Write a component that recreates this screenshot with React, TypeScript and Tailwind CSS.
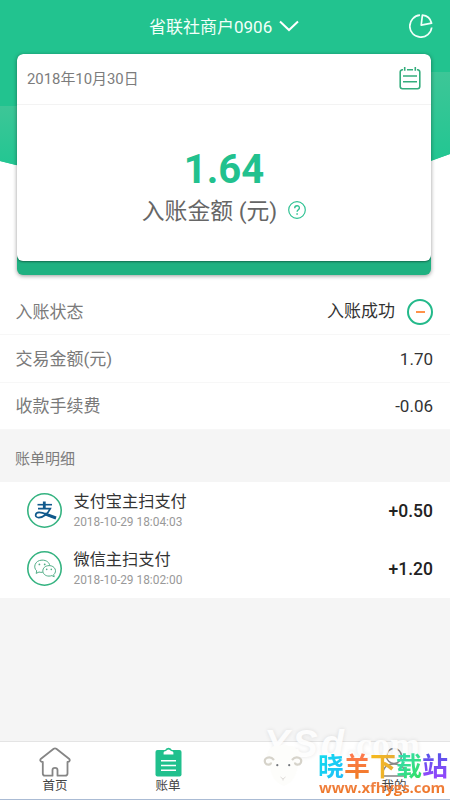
import type { ReactNode } from "react";

type Bill = {
  id: number;
  title: string;
  time: string;
  amount: string;
  icon: ReactNode;
};

function ChevronIcon() {
  return (
    <svg className="w-5 h-3" viewBox="0 0 20 12" fill="none" stroke="#fff" strokeWidth="2">
      <path d="M1 1.5 L10 10 L19 1.5" />
    </svg>
  );
}

function PieIcon() {
  return (
    <svg className="w-6 h-6" viewBox="0 0 24 24" fill="none" stroke="#f0fff9" strokeWidth="1.7" strokeLinejoin="round">
      <path d="M11 1.2 A11 11 0 1 0 22.7 13.5" />
      <path d="M13.4 1.2 A10.5 10.5 0 0 1 22.6 9.2 L12.2 11.2 Z" />
    </svg>
  );
}

function CalendarIcon() {
  return (
    <svg className="w-[22px] h-6" viewBox="0 0 22 24" fill="none" stroke="#35ad7d" strokeWidth="1.6">
      <path d="M4 3.7 H3.4 A2.4 2.4 0 0 0 1.2 6 V20.5 A2.4 2.4 0 0 0 3.5 22.8 H18.5 A2.4 2.4 0 0 0 20.8 20.5 V6 A2.4 2.4 0 0 0 18.6 3.7 H18" />
      <path d="M5.7 1 V4.7 M16.3 1 V4.7 M8 3.7 H14 M4 10 H18 M4 15.7 H18" />
    </svg>
  );
}

function HelpIcon() {
  return (
    <svg className="w-[18px] h-[18px]" viewBox="0 0 18 18" fill="none" stroke="#2fc293" strokeWidth="1.2">
      <circle cx="9" cy="9" r="8.3" />
      <path d="M6.7 7.2 C6.7 4 11.4 4 11.4 6.9 C11.4 8.7 9.1 8.7 9.1 10.8" strokeWidth="1.4" />
      <path d="M9.1 12.2 V13.7" strokeWidth="1.5" />
    </svg>
  );
}

function AlipayIcon() {
  return (
    <svg className="w-[35px] h-[35px]" viewBox="0 0 35 35" fill="none">
      <circle cx="17.5" cy="17.5" r="16.7" stroke="#35b381" strokeWidth="1.6" />
      <g stroke="#10598c">
        <path d="M10.5 11.7 H25" strokeWidth="1.6" />
        <path d="M17.3 8.5 V15.5" strokeWidth="2.8" />
        <path d="M11 15.6 H23.3 C21 20.5 16 24.7 11.7 24.6 C7.4 24.4 7.8 19.7 12 19.4 C16.5 19.2 20.5 22.6 28.8 25" strokeWidth="1.7" />
        <path d="M18 20.9 L29 25" strokeWidth="3" />
      </g>
    </svg>
  );
}

function WechatIcon() {
  return (
    <svg className="w-[35px] h-[35px]" viewBox="0 0 35 35" fill="none" stroke="#50ad86">
      <circle cx="17.5" cy="17.5" r="16.7" stroke="#35b381" strokeWidth="1.6" />
      <path d="M15.8 21.2 C14.5 21.5 13.2 21.4 12 21 L9.2 22.4 L9.7 19.8 C5.8 16.7 7.8 9.3 15 9.1 C19.6 9 22.5 11.7 22.7 14.6" />
      <path d="M22.2 14.6 C13.7 14.7 13.8 25 22 25.1 C23 25.1 24 24.9 24.9 24.6 L27.2 25.8 L26.7 23.6 C30.5 20.5 28 14.6 22.2 14.6 Z" />
      <g fill="#50ad86" stroke="none">
        <circle cx="12.4" cy="13.4" r="0.9" />
        <circle cx="17.7" cy="13.4" r="0.9" />
        <circle cx="19.7" cy="18.4" r="0.8" />
        <circle cx="24.3" cy="18.4" r="0.8" />
      </g>
    </svg>
  );
}

function HomeIcon() {
  return (
    <svg className="w-8 h-[30px]" viewBox="0 0 32 30" fill="none" stroke="#858585" strokeWidth="1.8" strokeLinejoin="round">
      <path d="M14.7 1.8 Q16 .8 17.3 1.8 L30 11.7 C31.5 13.2 30.5 15 28.5 15 V26.5 Q28.5 28.7 26 28.7 H18.5 V23 C18.5 20.2 13.5 20.2 13.5 23 V28.7 H6 Q3.8 28.7 3.8 26.5 V15 C1.5 15 .5 13.2 2 11.7 Z" />
    </svg>
  );
}

function BillIcon() {
  return (
    <svg className="w-[27px] h-[30px]" viewBox="0 0 27 30">
      <rect x="0.5" y="3" width="26" height="26.5" rx="2" fill="#20c08d" />
      <path d="M7.5 7.8 V5 Q7.5 3.5 10 3.3 Q10.8 .7 13.5 .7 Q16.2 .7 17 3.3 Q19.5 3.5 19.5 5 V7.8 Z" fill="#20c08d" />
      <path d="M8.6 7.4 V5.5 Q8.6 4.3 11 4.1 Q11.9 2.4 13.5 2.4 Q15.1 2.4 16 4.1 Q18.4 4.3 18.4 5.5 V7.4 Z" fill="#fff" />
      <path d="M6 13.7 H21 M6 18.5 H21 M6 23.3 H21" stroke="#fff" strokeWidth="1.6" />
    </svg>
  );
}

function UserIcon() {
  return (
    <svg className="w-8 h-[30px]" viewBox="0 0 32 30" fill="none" stroke="#858585" strokeWidth="1.5">
      <circle cx="16" cy="9" r="7.5" />
      <path d="M4.5 29 C4.5 21 9 17 16 17 C23 17 27.5 21 27.5 29 Z" />
    </svg>
  );
}

function SheepIcon() {
  return (
    <svg className="w-[46px] h-[46px]" viewBox="0 0 46 46" fill="none">
      <path d="M10 6 Q14 1 19 3 Q24 0 29 3 Q35 2 37 8 Q43 14 38 23 Q35 39 24 43 Q12 39 10 24 Q3 14 10 6 Z" fill="#fdfdfb" />
      <g stroke="#d6d3ca" strokeWidth="2.2">
        <path d="M14 17 C10 12 3 15 5.2 19.7 C6.6 22.5 11 22 11 19.5" />
        <path d="M32 17 C36 12 43 15 40.8 19.7 C39.4 22.5 35 22 35 19.5" />
      </g>
      <circle cx="17.3" cy="22.2" r="1.1" fill="#72767c" />
      <circle cx="29.2" cy="22.2" r="1.1" fill="#72767c" />
      <path d="M20.5 34 L23 36 L25.5 34 M23 36 V37.5" stroke="#dedbd8" />
    </svg>
  );
}

const bills: Bill[] = [
  { id: 1, title: "支付宝主扫支付", time: "2018-10-29 18:04:03", amount: "+0.50", icon: <AlipayIcon /> },
  { id: 2, title: "微信主扫支付", time: "2018-10-29 18:02:00", amount: "+1.20", icon: <WechatIcon /> },
];

function Row({ label, children }: { label: string; children: ReactNode }) {
  return (
    <div className="flex h-[47.3px] items-center justify-between border-b border-[#f7f7f7] pl-[15.5px] pr-[17px] pt-0.5 text-[17px]">
      <span className="pt-px text-[#7a7a7a]">{label}</span>
      <div className="flex items-center gap-3 text-[#333]">{children}</div>
    </div>
  );
}

function Tab({ label, icon }: { label: string; icon: ReactNode }) {
  return (
    <div className="flex w-[110px] flex-col items-center pt-[5px]">
      {icon}
      <span className="text-[12.5px] leading-[18px] text-[#444]">{label}</span>
    </div>
  );
}

function Watermark() {
  return (
    <div className="pointer-events-none absolute left-0 top-0 h-full w-full">
      <div className="absolute left-[264px] top-[720px] flex items-baseline text-white/90 [text-shadow:0_0_4px_#0000001c]">
        <span className="font-['Liberation_Sans'] text-[38px] font-bold italic leading-[48px] tracking-[3px]">YSd</span>
        <span className="font-['Liberation_Serif'] text-[36px] font-bold leading-[40px]">.com</span>
      </div>
      <div className="absolute left-[260px] top-[743px]">
        <SheepIcon />
      </div>
      <div className="absolute left-[318px] top-[752px] flex text-[26px] font-bold leading-[30px] text-transparent">
        <span className="bg-linear-to-br from-[#12ddec] to-[#21bafa] bg-clip-text">晓</span>
        <span className="bg-linear-to-b from-[#ff7950] to-[#ee7c11] bg-clip-text">羊</span>
        <span className="bg-linear-to-r from-[#f7ba16] to-[#e7ad35] bg-clip-text">下</span>
        <span className="bg-linear-to-br from-[#36dcb7] to-[#35df54] bg-clip-text">载</span>
        <span className="bg-linear-to-b from-[#5153e9] to-[#9d42ff] bg-clip-text">站</span>
      </div>
      <div className="absolute left-[319px] top-[777px] bg-linear-to-b from-[#f18a55] to-[#ed7008] bg-clip-text font-['Open_Sans'] text-[15px] font-bold leading-[21px] tracking-[-0.1px] text-transparent">
        www.xfhygs.com
      </div>
    </div>
  );
}

export default function App() {
  return (
    <div className="relative flex h-[800px] w-[450px] flex-col overflow-hidden bg-[#f5f5f5] font-[Roboto,'Noto_Sans_CJK_SC',sans-serif]">
      <div className="grid h-[288px] shrink-0 bg-white">
        {/* green backdrop with the slanted lower edge */}
        <svg className="col-start-1 row-start-1 h-[170px] w-[450px]" viewBox="0 0 450 170">
          <defs>
            <linearGradient id="side" x1="0" y1="0" x2="0" y2="1">
              <stop offset="0" stopColor="#3dc697" />
              <stop offset="1" stopColor="#22c692" />
            </linearGradient>
          </defs>
          <path d="M0 0 H450 V154 L420 165 H16 L0 161 Z" fill="#22c38f" />
          <path d="M0 106 H20 V166 L0 161 Z" fill="url(#side)" />
          <path d="M430 72 H450 V154 L430 161 Z" fill="url(#side)" />
        </svg>
        <div className="col-start-1 row-start-1 flex flex-col">
          <header className="flex h-[54px] items-center justify-between pl-[149px] pr-[17px]">
            <div className="flex items-center gap-[7px] text-[17px] text-[#f2fff9]">
              <span className="pt-px">省联社商户0906</span>
              <div className="pb-[3px]">
                <ChevronIcon />
              </div>
            </div>
            <div className="pb-[3px]">
              <PieIcon />
            </div>
          </header>
          <div className="ml-[17px] h-[221px] w-[414px] overflow-hidden rounded-md bg-[#1fb181] shadow-[0_1px_4px_#0006]">
            <div className="h-[207px] rounded-md bg-white shadow-[0_1px_2px_#0006]">
              <div className="flex h-[51px] items-center justify-between border-b border-[#f3f3f3] pl-2.5 pr-2.5">
                <span className="text-[14.9px] text-[#7c7c7c]">2018年10月30日</span>
                <div className="pb-0.5">
                  <CalendarIcon />
                </div>
              </div>
              <div className="flex flex-col items-center pt-10">
                <div className="text-[40px] font-bold leading-[50px] text-[#22c18e]">1.64</div>
                <div className="mt-px flex items-center gap-[11px] text-[22.8px] leading-8 text-[#666]">
                  <span>入账金额 (元)</span>
                  <div className="pb-1">
                    <HelpIcon />
                  </div>
                </div>
              </div>
            </div>
          </div>
        </div>
      </div>

      <div className="shrink-0 bg-white">
        <Row label="入账状态">
          <span>入账成功</span>
          <span className="mb-px flex h-[26px] w-[26px] items-center justify-center rounded-full border-2 border-[#23b98a]">
            <span className="h-0.5 w-[9px] bg-[#ff9249]" />
          </span>
        </Row>
        <Row label="交易金额(元)">1.70</Row>
        <Row label="收款手续费">-0.06</Row>
      </div>

      <div className="flex h-[52px] shrink-0 items-center pl-[15px] pt-1.5 text-[15px] text-[#7d7d7d]">账单明细</div>

      <div className="h-[116px] shrink-0 bg-white">
        {bills.map((bill) => (
          <div key={bill.id} className="flex h-[58px] items-center pb-px pl-[26.5px] pr-[17px]">
            {bill.icon}
            <div className="ml-3 flex flex-1 flex-col pt-[3px]">
              <span className="text-[16.2px] leading-[22px] text-[#333]">{bill.title}</span>
              <span className="text-[11.9px] leading-[19px] text-[#999]">{bill.time}</span>
            </div>
            <span className="pt-0.5 text-[17.5px] font-medium text-[#222]">{bill.amount}</span>
          </div>
        ))}
      </div>

      <nav className="mt-auto flex h-[59px] shrink-0 gap-[3px] border-b border-t border-b-[#aabbd4] border-t-[#e4e4e4] bg-white">
        <Tab label="首页" icon={<HomeIcon />} />
        <Tab label="账单" icon={<BillIcon />} />
        <div className="w-[110px]" />
        <Tab label="我的" icon={<UserIcon />} />
      </nav>

      <Watermark />
    </div>
  );
}
